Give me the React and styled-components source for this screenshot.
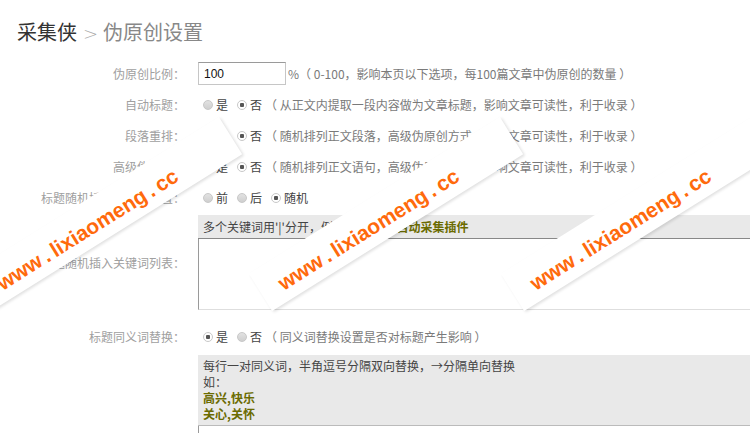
import styled, { createGlobalStyle } from "styled-components";

const GlobalStyle = createGlobalStyle`
  html, body {
    margin: 0;
    padding: 0;
    overflow: hidden;
    background: #fff;
  }
  body {
    font-family: "Noto Sans CJK SC", "Noto Sans", sans-serif;
    font-size: 12px;
    color: #555;
  }
`;

const rows = [
  { label: "自动标题：", options: ["是", "否"], checked: 1, desc: "（ 从正文内提取一段内容做为文章标题，影响文章可读性，利于收录 ）" },
  { label: "段落重排：", options: ["是", "否"], checked: 1, desc: "（ 随机排列正文段落，高级伪原创方式，影响文章可读性，利于收录 ）" },
  { label: "高级伪原创：", options: ["是", "否"], checked: 1, desc: "（ 随机排列正文语句，高级伪原创方式，影响文章可读性，利于收录 ）" },
  { label: "标题随机插入关键词位置：", options: ["前", "后", "随机"], checked: 2, desc: "" },
];

// where each watermark band sits (centre point)
const marks = [
  { x: 105, y: 214 },
  { x: 386, y: 214 },
  { x: 638, y: 214 },
];

function Radios({ options, checked }) {
  return (
    <RadioGroup>
      {options.map((opt, i) => (
        <RadioItem key={opt}>
          <Radio $checked={i === checked} />
          {opt}
        </RadioItem>
      ))}
    </RadioGroup>
  );
}

export default function App() {
  return (
    <>
      <GlobalStyle />
      <Page>
        <Title>
          <strong>采集侠</strong>
          <Chevron>&gt;</Chevron>
          伪原创设置
        </Title>

        <Form>
          <Row>
            <Label>伪原创比例：</Label>
            <Field>
              <Input defaultValue="100" />
              <Desc>%（ 0-100，影响本页以下选项，每100篇文章中伪原创的数量 ）</Desc>
            </Field>
          </Row>

          {rows.map((r) => (
            <Row key={r.label}>
              <Label>{r.label}</Label>
              <Field>
                <Radios options={r.options} checked={r.checked} />
                {r.desc && <Desc>{r.desc}</Desc>}
              </Field>
            </Row>
          ))}

          <BoxRow $top={2}>
            <Label>标题随机插入关键词列表：</Label>
            <Box>
              <BoxHead $line="#888">
                多个关键词用'|'分开，例：<Olive>采集侠|全自动采集插件</Olive>
              </BoxHead>
              <Area $height={70} />
            </Box>
          </BoxRow>

          <Row $top={11}>
            <Label>标题同义词替换：</Label>
            <Field>
              <Radios options={["是", "否"]} checked={0} />
              <Desc>（ 同义词替换设置是否对标题产生影响 ）</Desc>
            </Field>
          </Row>

          <BoxRow $top={3}>
            <span />
            <Box>
              <BoxHead $line="#bbb" $tall>
                <div>每行一对同义词，半角逗号分隔双向替换，→分隔单向替换</div>
                <div>如：</div>
                <Olive>高兴,快乐</Olive>
                <Olive>关心,关怀</Olive>
              </BoxHead>
              <Area $height={60} />
            </Box>
          </BoxRow>
        </Form>

        {marks.map((m, i) => (
          <Band key={i} style={{ left: m.x - 148, top: m.y - 22 }}>
            <Mark>www . lixiaomeng . cc</Mark>
          </Band>
        ))}
      </Page>
    </>
  );
}

const Page = styled.div`
  position: relative;
  width: 750px;
  height: 433px;
  overflow: hidden;
  padding: 20px 0 0 17px;
  box-sizing: border-box;
`;

const Title = styled.h2`
  margin: 0;
  height: 24px;
  line-height: 24px;
  font-size: 20px;
  font-weight: 400;
  color: #888;
  strong {
    font-weight: 400;
    color: #333;
  }
`;

const Chevron = styled.span`
  font-family: "DejaVu Sans", sans-serif;
  font-weight: 300;
  font-size: 18px;
  color: #aaa;
  margin: 0 5px 0 6px;
`;

const Form = styled.div`
  margin: 14px 0 0 -17px;
  display: flex;
  flex-direction: column;
`;

const Row = styled.div`
  display: grid;
  grid-template-columns: 185px 1fr;
  column-gap: 13px;
  align-items: center;
  height: 31px;
  margin-top: ${(p) => p.$top || 0}px;
`;

const BoxRow = styled(Row)`
  height: auto;
  align-items: center;
`;

const Label = styled.div`
  text-align: right;
  color: #a0a0a0;
  white-space: nowrap;
`;

const Field = styled.div`
  display: flex;
  align-items: center;
  white-space: nowrap;
`;

const Input = styled.input`
  box-sizing: border-box;
  width: 88px;
  height: 23px;
  border: 1px solid #c6c6c6;
  border-top-color: #9a9a9a;
  padding: 0 5px;
  font-family: "Liberation Sans", Arial, sans-serif;
  font-size: 12px;
  color: #111;
  outline: none;
`;

const Desc = styled.span`
  color: #7a7a7a;
  margin-left: 2px;
`;

const RadioGroup = styled.div`
  display: flex;
  align-items: center;
  gap: 9px;
  margin-left: 5px;
  margin-right: 1px;
  color: #444;
`;

const RadioItem = styled.label`
  display: flex;
  align-items: center;
  gap: 3px;
`;

const Radio = styled.span`
  display: inline-block;
  box-sizing: border-box;
  width: 10px;
  height: 10px;
  border-radius: 50%;
  border: 1px solid #c8c8c8;
  background: ${(p) =>
    p.$checked
      ? "radial-gradient(circle, #555 0 2px, #fff 2.5px)"
      : "linear-gradient(#e2e2e2, #cfcfcf)"};
`;

const Box = styled.div`
  width: 620px;
  display: flex;
  flex-direction: column;
`;

const BoxHead = styled.div`
  background: #e9e9e9;
  color: #444;
  padding: ${(p) => (p.$tall ? "3px 5px" : "0 5px")};
  height: ${(p) => (p.$tall ? "auto" : "23px")};
  line-height: ${(p) => (p.$tall ? "16px" : "23px")};
  border-bottom: 1px solid ${(p) => p.$line};
  white-space: nowrap;
  display: ${(p) => (p.$tall ? "flex" : "block")};
  flex-direction: column;
`;

const Olive = styled.span`
  color: #6b6b00;
  font-weight: 700;
`;

const Area = styled.div`
  height: ${(p) => p.$height}px;
  border-left: 1px solid #9a9a9a;
  border-bottom: 1px solid #dedede;
  background: #fff;
`;

const Band = styled.div`
  position: absolute;
  width: 296px;
  height: 44px;
  background: #fff;
  transform: rotate(-32deg);
  box-shadow: 1px 2px 3px rgba(0, 0, 0, 0.12);
  display: flex;
  align-items: center;
  justify-content: center;
  padding: 8px 46px 0 0;
  box-sizing: border-box;
`;

const Mark = styled.span`
  font-family: "Liberation Sans", Arial, sans-serif;
  font-weight: 700;
  font-size: 21px;
  word-spacing: -2px;
  color: #ff6a0c;
  white-space: nowrap;
`;
